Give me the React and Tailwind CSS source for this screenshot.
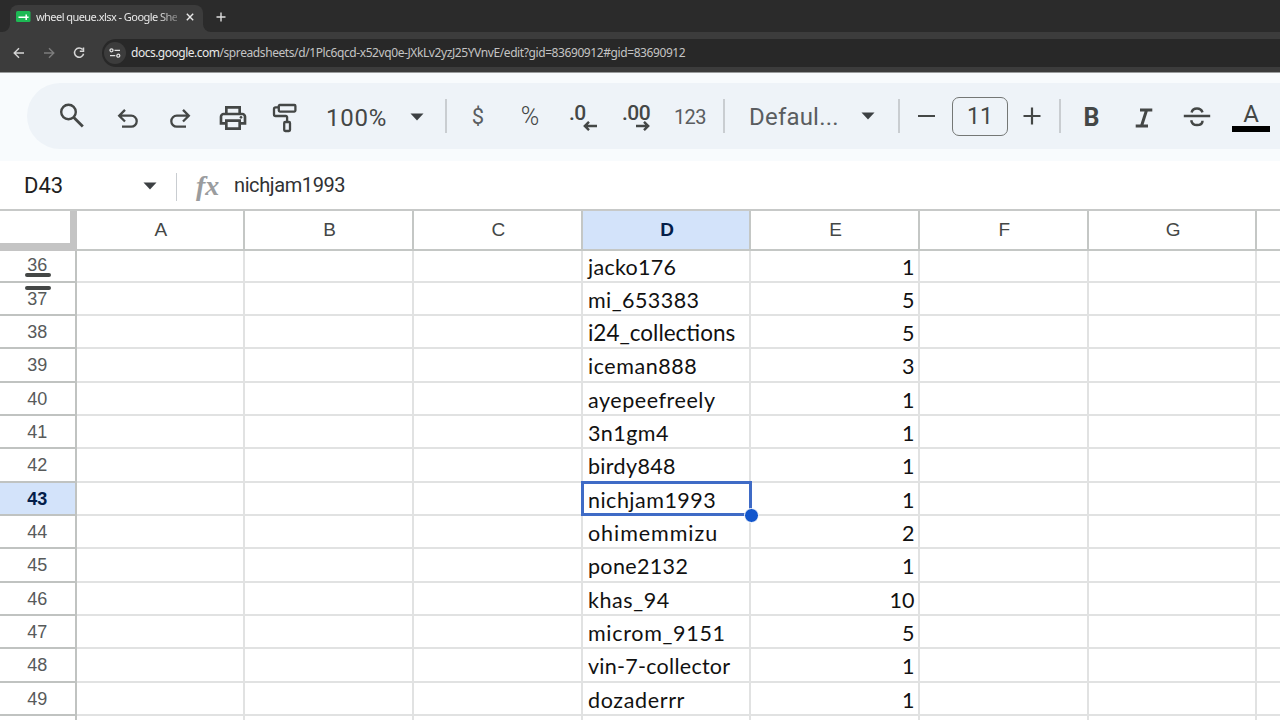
import { MdOutlinePrint } from "react-icons/md";

const rows = [
  [36, "jacko176", 1, "tracking-[0.3px]"],
  [37, "mi_653383", 5, "tracking-[0.45px]"],
  [38, "i24_collections", 5, "text-[22.5px]"],
  [39, "iceman888", 3, "tracking-[0.55px]"],
  [40, "ayepeefreely", 1, "tracking-[0.55px]"],
  [41, "3n1gm4", 1, "tracking-[0.45px]"],
  [42, "birdy848", 1, "tracking-[0.35px]"],
  [43, "nichjam1993", 1, "tracking-[0.5px]"],
  [44, "ohimemmizu", 2, "tracking-[0.95px]"],
  [45, "pone2132", 1, "tracking-[0.35px]"],
  [46, "khas_94", 10, "tracking-[0.6px]"],
  [47, "microm_9151", 5, "tracking-[0.7px]"],
  [48, "vin-7-collector", 1, "tracking-[0.27px]"],
  [49, "dozaderrr", 1, "tracking-[0.65px]"],
  ["", "", "", ""],
];
const columns = ["A", "B", "C", "D", "E", "F", "G", ""];

function Slot({ className, children }) {
  return <div className={`flex shrink-0 items-center justify-center ${className}`}>{children}</div>;
}

function Caret() {
  return (
    <svg width="14" height="8" viewBox="0 0 14 8" className="fill-[#3c4043]">
      <path d="M.5.5h13L7 7.5z" />
    </svg>
  );
}

function Divider({ className }) {
  return <div className={`h-[34px] w-[2px] shrink-0 bg-[#c9cdd1] ${className}`} />;
}

function TabStrip() {
  return (
    <div className="flex h-8 shrink-0 items-end bg-[#2b2b2b] font-['Noto_Sans',sans-serif]">
      <svg width="8" height="8" viewBox="0 0 8 8" className="ml-[2px] fill-[#3c3c3c]">
        <path d="M8 0v8H0a8 8 0 0 0 8-8z" />
      </svg>
      <div className="flex h-[27px] w-[193px] items-center rounded-t-lg bg-[#3c3c3c] pb-[4px] pl-[6px]">
        <svg width="15" height="11" viewBox="0 0 15 11" className="shrink-0">
          <rect width="14.5" height="11" rx="1.5" fill="#1db954" />
          <path d="M2.5 6.2h8.8M10.2 3.6v5.4M10 6.2h2.6" stroke="#fff" strokeWidth="1.5" />
        </svg>
        <div className="ml-[5px] w-[141px] whitespace-nowrap text-[11px] leading-4 tracking-[-0.55px] text-[#e8e8e8] [mask-image:linear-gradient(to_right,#000_122px,rgba(0,0,0,0.35)_141px)]">
          wheel queue.xlsx - Google Shee
        </div>
        <svg width="8" height="8" viewBox="0 0 8 8" className="ml-[9px] shrink-0 stroke-[#e8e8e8]" strokeWidth="1.4">
          <path d="M.8.8l6.4 6.4M7.2.8L.8 7.2" />
        </svg>
      </div>
      <svg width="8" height="8" viewBox="0 0 8 8" className="fill-[#3c3c3c]">
        <path d="M0 0v8h8a8 8 0 0 1-8-8z" />
      </svg>
      <svg width="10" height="10" viewBox="0 0 10 10" className="mb-[10px] ml-[5px] stroke-[#dedede]" strokeWidth="1.4">
        <path d="M5 .5v9M.5 5h9" />
      </svg>
    </div>
  );
}

function AddressBar() {
  return (
    <div className="flex h-10 shrink-0 items-center bg-[#3c3c3c] pt-px font-['Noto_Sans',sans-serif]">
      <svg width="12" height="12" viewBox="0 0 12 12" className="ml-[13px] fill-none stroke-[#d6d6d6]" strokeWidth="1.4">
        <path d="M11 6H1.5M6 1.2L1.2 6 6 10.8" />
      </svg>
      <svg width="12" height="12" viewBox="0 0 12 12" className="ml-[18px] fill-none stroke-[#7c7c7c]" strokeWidth="1.4">
        <path d="M1 6h9.5M6 1.2L10.8 6 6 10.8" />
      </svg>
      <svg width="12" height="12" viewBox="0 0 12 12" className="ml-[18px] fill-none stroke-[#d6d6d6]" strokeWidth="1.5">
        <path d="M9.6 2.6A4.6 4.6 0 1 0 10.6 6.8M10.5.6v3.7H6.8" />
      </svg>
      <div className="ml-[17px] flex h-7 flex-1 items-center rounded-l-full bg-[#282828] pl-[2px]">
        <div className="flex h-[22px] w-[22px] items-center justify-center rounded-full bg-[#3c3c3c]">
          <svg width="12" height="10" viewBox="0 0 12 10" className="fill-none stroke-[#e0e0e0]" strokeWidth="1.3">
            <circle cx="2.5" cy="2.3" r="1.5" />
            <path d="M5.5 2.3H11M1 7.7h5.3" />
            <circle cx="9.3" cy="7.7" r="1.5" />
          </svg>
        </div>
        <div className="ml-[5px] mt-px whitespace-nowrap text-[12px] leading-4 tracking-[-0.41px] text-[#c4c4c4]">
          <span className="tracking-[-0.5px] text-[#e8e8e8]">docs.google.com</span>/spreadsheets/d/1Plc6qcd-x52vq0e-JXkLv2yzJ25YVnvE/edit?gid=83690912#gid=83690912
        </div>
      </div>
    </div>
  );
}

function Toolbar() {
  return (
    <div className="h-[89px] shrink-0 border-t border-[#9a9c9c] bg-[#f8fbfd] pl-[27px] pt-[10px]">
      <div className="flex h-[66px] items-center overflow-hidden rounded-l-[33px] bg-[#eef3f8] pl-[18px] font-[Roboto,sans-serif] text-[#444746]">
        <Slot className="w-[53px]">
          <svg width="26" height="26" viewBox="0 0 26 26" className="fill-none stroke-[#444746]" strokeWidth="2.4">
            <circle cx="9.5" cy="9" r="7.3" />
            <path d="M14.6 14.2l9.2 9.3" strokeWidth="2.8" />
          </svg>
        </Slot>
        <Slot className="ml-1 w-[52px]">
          <svg width="22" height="20" viewBox="0 0 22 20" className="mt-[5px] fill-none stroke-[#444746]" strokeWidth="2.3">
            <path d="M8 .9L2.2 6.7 8 12.5M2.5 6.7h11.7a5.5 5.5 0 0 1 0 11H5" />
          </svg>
        </Slot>
        <Slot className="w-[52px]">
          <svg width="22" height="20" viewBox="0 0 22 20" className="mt-[5px] fill-none stroke-[#444746]" strokeWidth="2.3">
            <path d="M14 .9l5.8 5.8-5.8 5.8M19.5 6.7H7.8a5.5 5.5 0 0 0 0 11H17" />
          </svg>
        </Slot>
        <Slot className="w-[53px]">
          <MdOutlinePrint size={32} className="mt-[3px]" />
        </Slot>
        <Slot className="w-[52px]">
          <svg width="26" height="30" viewBox="0 0 26 30" className="mt-[4px] fill-none stroke-[#444746]" strokeWidth="2.3" strokeLinejoin="round">
            <rect x="6.8" y="2" width="16.6" height="6.6" rx="1" />
            <path d="M6.8 4.3H3.6a1.6 1.6 0 0 0-1.6 1.6v5.5a1.6 1.6 0 0 0 1.6 1.6h10.3a1.2 1.2 0 0 1 1.2 1.2V19" />
            <rect x="12.2" y="19" width="5.8" height="9" rx="1" />
          </svg>
        </Slot>
        <div className="ml-[15px] w-[76px] pt-[3px] text-[24px] leading-8 tracking-[0.8px]">100%</div>
        <Slot className="mt-[2px] w-[30px]"><Caret /></Slot>
        <Divider className="ml-[13px]" />
        <Slot className="ml-[5px] w-[52px] text-[22px] text-[#5a5d60]">$</Slot>
        <Slot className="w-[52px] pt-[2px] text-[25px] font-light">%</Slot>
        <Slot className="w-[54px]">
          <div className="flex w-7 flex-col">
            <div className="text-[21px] font-medium leading-[22px] tracking-[-0.6px]">.0</div>
            <svg width="14" height="10" viewBox="0 0 14 10" className="-mt-[3px] self-end fill-none stroke-[#444746]" strokeWidth="2.4">
              <path d="M14 5H2.5M6 .8L1.8 5 6 9.2" />
            </svg>
          </div>
        </Slot>
        <Slot className="w-[52px]">
          <div className="flex w-7 flex-col">
            <div className="text-[21px] font-medium leading-[22px] tracking-[-0.5px]">.00</div>
            <svg width="14" height="10" viewBox="0 0 14 10" className="-mt-[3px] self-end fill-none stroke-[#444746]" strokeWidth="2.4">
              <path d="M0 5h11.5M8 .8L12.2 5 8 9.2" />
            </svg>
          </div>
        </Slot>
        <Slot className="w-[56px] pt-px text-[20px] tracking-[-0.5px] text-[#5a5d60]">123</Slot>
        <Divider className="ml-[5px]" />
        <div className="ml-[24px] w-[104px] pt-px text-[24px] leading-8 tracking-[0.2px] text-[#5a5d60]">Defaul...</div>
        <Slot className="w-[30px]"><Caret /></Slot>
        <Divider className="ml-[15px]" />
        <Slot className="w-[52px]"><div className="h-[2.5px] w-[17px] bg-[#444746]" /></Slot>
        <Slot className="h-[39px] w-[56px] rounded-[7px] border border-[#747775] pt-[2px] text-[23px]">11</Slot>
        <Slot className="w-[48px]">
          <svg width="18" height="18" viewBox="0 0 18 18" className="stroke-[#444746]" strokeWidth="2.2">
            <path d="M9 .5v17M.5 9h17" />
          </svg>
        </Slot>
        <Divider className="ml-[3px]" />
        <Slot className="ml-1 w-[53px] pt-[3px] text-[25px] font-bold">B</Slot>
        <Slot className="w-[52px]">
          <svg width="18" height="20" viewBox="0 0 18 20" className="mt-[3px] fill-none stroke-[#444746]" strokeWidth="3">
            <path d="M5 2h12.3M.7 18H13M11.6 2L6.5 18" />
          </svg>
        </Slot>
        <Slot className="w-[54px]">
          <svg width="28" height="22" viewBox="0 0 28 22" className="mt-[2px] fill-none stroke-[#444746]" strokeWidth="2.5">
            <path d="M.8 10h26.4M8.6 6.6C9.2 3.8 11.2 2.6 14 2.6c2.7 0 4.6 1.2 5.5 3.8M8.2 14.2c.6 3.3 2.8 4.9 5.8 4.9 3.3 0 5.5-1.5 5.5-4.4" />
          </svg>
        </Slot>
        <Slot className="w-[54px] flex-col pt-px">
          <div className="text-[24px] leading-[24px]">A</div>
          <div className="h-[6px] w-[38px] bg-black" />
        </Slot>
      </div>
    </div>
  );
}

function FormulaBar() {
  return (
    <div className="flex h-12 shrink-0 items-center bg-white font-[Roboto,sans-serif] text-[22px] leading-7 text-[#1f1f1f]">
      <div className="w-[119px] pl-6 pt-px">D43</div>
      <Slot className="ml-[16px] mt-px w-[30px]"><Caret /></Slot>
      <div className="ml-[11px] mt-1 h-7 w-px bg-[#c9cdd1]" />
      <div className="ml-[19px] mt-[2px] w-[38px] font-['Liberation_Serif',serif] text-[28px] font-bold italic leading-7 text-[#9a9c9e]">fx</div>
      <div className="text-[20px] leading-7 tracking-[-0.4px] text-[#303134]">nichjam1993</div>
    </div>
  );
}

function Sheet() {
  return (
    <div className="flex min-h-0 flex-1 flex-col font-['Liberation_Sans',sans-serif]">
      <div className="flex h-[41.7px] w-[1430px] shrink-0 border-t-2 border-[#c7c9c8] text-[19px] text-[#444746]">
        <div className="w-[76.6px] shrink-0 border-b-8 border-r-[7px] border-[#c4c4c4]" />
        {columns.map((name, i) => (
          <Slot
            key={i}
            className={`w-[168.7px] border-b-2 border-r-2 border-[#c4c7c5] pl-[2px] pt-px ${name === "D" ? "bg-[#d3e3fa] font-bold text-[#041e49]" : ""}`}
          >
            {name}
          </Slot>
        ))}
      </div>
      {rows.map(([n, user, count, tracking], r) => (
        <div key={r} className={`flex w-[1430px] shrink-0 ${n === 36 ? "h-[32px]" : "h-[33.33px]"}`}>
          <div
            className={`relative flex w-[76.6px] shrink-0 justify-center border-b-2 border-r-2 border-[#c0c3c1] text-[18px] ${n === 36 ? "leading-[29px]" : "leading-[32px]"} ${
              n === 43 ? "bg-[#d3e3fa] font-bold text-[#041e49]" : "text-[#575a5a]"
            }`}
          >
            {n}
            {n === 36 && (
              <div className="absolute left-[25px] top-[22px] z-10 flex flex-col gap-[9px]">
                <div className="h-[4px] w-[26px] rounded-full bg-[#444746]" />
                <div className="h-[4px] w-[26px] rounded-full bg-[#444746]" />
              </div>
            )}
          </div>
          {columns.map((name, i) => (
            <div
              key={i}
              className={`relative w-[168.7px] shrink-0 whitespace-nowrap border-b-2 border-r-2 border-[#e1e2e2] font-[Lato,sans-serif] text-[21.5px] text-[#111] ${n === 36 ? "leading-[32px]" : "leading-[34px]"} ${
                name === "E" ? "pr-[3.5px] text-right" : "pl-[5.3px]"
              }`}
            >
              {name === "D" && <span className={tracking}>{user}</span>}
              {name === "E" && count}
              {name === "D" && n === 43 && (
                <div className="absolute -left-[2px] -top-[2px] z-10 h-[35px] w-[171px] border-[3px] border-[#3f6bc6]">
                  <div className="absolute -bottom-[10px] -right-[10px] h-[15px] w-[15px] rounded-full border border-white bg-[#1155cc]" />
                </div>
              )}
            </div>
          ))}
        </div>
      ))}
    </div>
  );
}

export default function App() {
  return (
    <div className="flex h-[720px] w-[1280px] flex-col overflow-hidden bg-white">
      <TabStrip />
      <AddressBar />
      <Toolbar />
      <FormulaBar />
      <Sheet />
    </div>
  );
}
